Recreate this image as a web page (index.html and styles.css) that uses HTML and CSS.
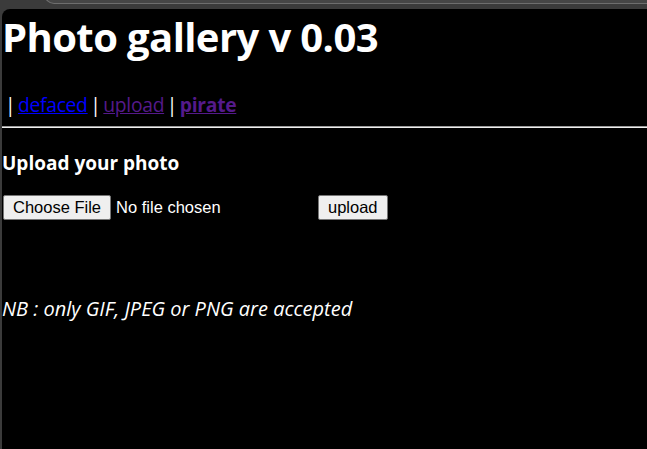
FILE: index.html
```html
<!DOCTYPE html>
<html>
<head>
<meta charset="utf-8">
<title>Photo gallery v 0.03</title>
<link rel="stylesheet" href="styles.css">
</head>
<body>
<div class="chrome"></div>
<div class="frame">
  <h1 class="title">Photo gallery v 0.03</h1>
  <p class="nav">| <a class="link" href="#">defaced</a> | <a class="link visited" href="#">upload</a> | <a class="link visited strong" href="#">pirate</a></p>
  <hr class="rule">
  <h3 class="subtitle">Upload your photo</h3>
  <form class="upload-form">
    <span class="file-field">
      <span class="btn">Choose File</span>
      <span class="file-name">No file chosen</span>
    </span>
    <span class="btn">upload</span>
  </form>
  <p class="note">NB : only GIF, JPEG or PNG are accepted</p>
</div>
</body>
</html>
```
FILE: styles.css
```css
html, body {
  margin: 0;
  padding: 0;
  height: 100%;
  overflow: hidden;
}
body {
  background: #3b3b3b;
  position: relative;
  font-family: "Open Sans", "Noto Sans", sans-serif;
}
.chrome {
  position: absolute;
  top: -10px;
  left: 44px;
  right: -2px;
  height: 13px;
  background: #464646;
  border-left: 1px solid #6e6e6e;
  border-bottom: 1px solid #6e6e6e;
  border-bottom-left-radius: 10px;
}
.frame {
  margin: 9px 0 0 2px;
  height: calc(100% - 9px);
  background: #000;
  border-top-left-radius: 8px;
  color: #fff;
  display: flex;
  flex-direction: column;
}
.title {
  margin: 0;
  font-size: 40px;
  font-weight: 700;
  letter-spacing: -0.6px;
  line-height: 56px;
}
.nav {
  margin: 26px 0 0 3px;
  font-size: 19.3px;
  word-spacing: -2px;
  letter-spacing: -0.3px;
  line-height: 27px;
}
.link {
  color: #0000ff;
}
.link.visited {
  color: #551a8b;
}
.link.strong {
  font-weight: 700;
}
.rule {
  margin: 8px 0 0 0;
  height: 0;
  border: 0;
  border-top: 1px solid #9a9a9a;
  border-bottom: 1px solid #efefef;
}
.subtitle {
  margin: 22px 0 0 0;
  font-size: 19px;
  font-weight: 700;
  line-height: 27px;
}
.upload-form {
  margin: 18px 0 0 1px;
  display: flex;
  align-items: center;
  font-family: "Liberation Sans", Arial, sans-serif;
  font-size: 16.5px;
}
.file-field {
  display: flex;
  align-items: center;
  width: 315px;
}
.btn {
  box-sizing: border-box;
  height: 25px;
  display: inline-flex;
  align-items: center;
  padding: 0 9px;
  background: #efefef;
  color: #000;
  border: 1px solid #767676;
  border-radius: 2px;
}
.file-name {
  margin-left: 5px;
}
.note {
  margin: 75px 0 0 0;
  font-size: 20px;
  font-style: italic;
  line-height: 28px;
}
```
